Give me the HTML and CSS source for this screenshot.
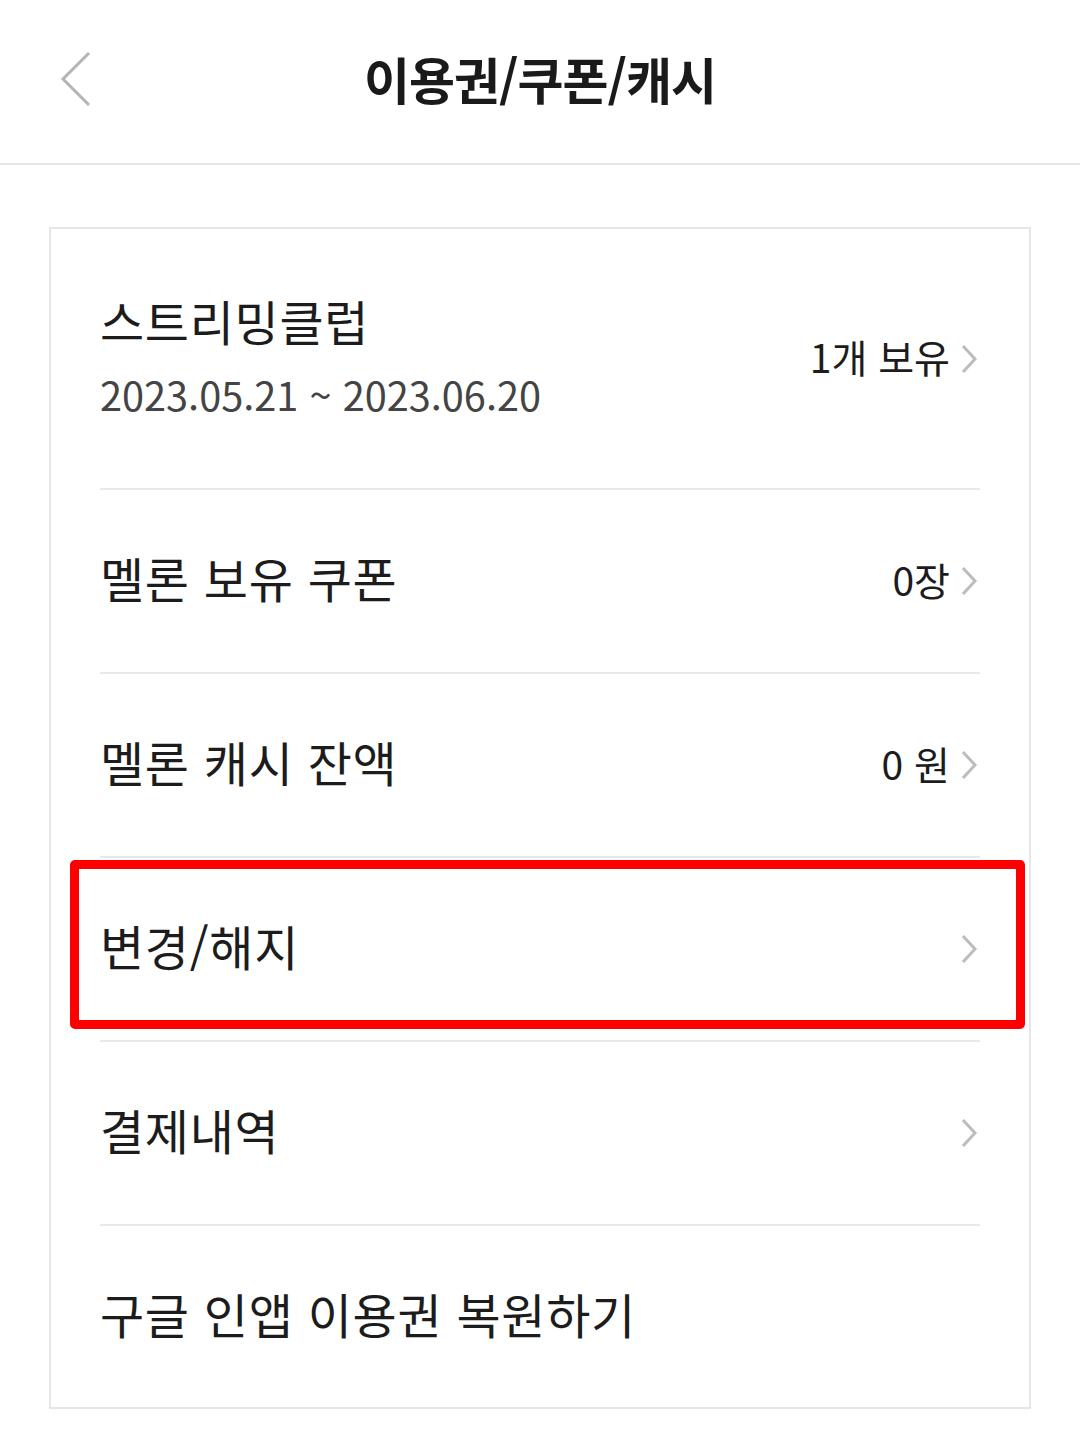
FILE: index.html
```html
<!DOCTYPE html>
<html lang="ko">
<head>
<meta charset="utf-8">
<link rel="stylesheet" href="styles.css">
</head>
<body>
<header class="topbar">
  <svg class="back" width="32" height="56" viewBox="0 0 32 56"><polyline points="29,2 3,28 29,54" fill="none" stroke="#b4b4b4" stroke-width="3"/></svg>
  <h1 class="title">이용권/쿠폰/캐시</h1>
</header>
<main class="card">
  <div class="row row-first">
    <div class="left">
      <div class="label">스트리밍클럽</div>
      <div class="date">2023.05.21 ~ 2023.06.20</div>
    </div>
    <div class="right"><span class="value">1개 보유</span><svg class="chev" width="18" height="30" viewBox="0 0 18 30"><polyline points="3,2 15,15 3,28" fill="none" stroke="#bcbcbc" stroke-width="3"/></svg></div>
  </div>
  <div class="row">
    <div class="label">멜론 보유 쿠폰</div>
    <div class="right"><span class="value">0장</span><svg class="chev" width="18" height="30" viewBox="0 0 18 30"><polyline points="3,2 15,15 3,28" fill="none" stroke="#bcbcbc" stroke-width="3"/></svg></div>
  </div>
  <div class="row">
    <div class="label">멜론 캐시 잔액</div>
    <div class="right"><span class="value">0 원</span><svg class="chev" width="18" height="30" viewBox="0 0 18 30"><polyline points="3,2 15,15 3,28" fill="none" stroke="#bcbcbc" stroke-width="3"/></svg></div>
  </div>
  <div class="row row-hl">
    <div class="label">변경/해지</div>
    <div class="right"><svg class="chev" width="18" height="30" viewBox="0 0 18 30"><polyline points="3,2 15,15 3,28" fill="none" stroke="#bcbcbc" stroke-width="3"/></svg></div>
    <div class="highlight"></div>
  </div>
  <div class="row">
    <div class="label">결제내역</div>
    <div class="right"><svg class="chev" width="18" height="30" viewBox="0 0 18 30"><polyline points="3,2 15,15 3,28" fill="none" stroke="#bcbcbc" stroke-width="3"/></svg></div>
  </div>
  <div class="row row-last">
    <div class="label">구글 인앱 이용권 복원하기</div>
  </div>
</main>
</body>
</html>
```
FILE: styles.css
```css
html, body {
  margin: 0;
  padding: 0;
  background: #ffffff;
}
body {
  width: 1080px;
  height: 1455px;
  font-family: "Noto Sans CJK KR", "Noto Sans", sans-serif;
  color: #1c1c1c;
  overflow: hidden;
}
.topbar {
  position: relative;
  height: 163px;
  border-bottom: 2px solid #e6e6e6;
  display: flex;
  align-items: center;
  justify-content: center;
  box-sizing: content-box;
}
.back {
  position: absolute;
  left: 60px;
  top: 51px;
}
.title {
  margin: 0;
  font-size: 50px;
  font-weight: 700;
  letter-spacing: -1px;
  color: #1a1a1a;
  transform: translateY(-4px);
}
.card {
  position: relative;
  margin: 62px 0 0 49px;
  width: 982px;
  box-sizing: border-box;
  border: 2px solid #e6e6e6;
  padding: 0 49px;
}
.row {
  position: relative;
  height: 182px;
  display: flex;
  align-items: center;
  justify-content: space-between;
  border-bottom: 2px solid #e8e8e8;
}
.row-first {
  height: 259px;
}
.row-last {
  height: 181px;
  border-bottom: none;
}
.left {
  display: flex;
  flex-direction: column;
}
.label {
  font-size: 48px;
  line-height: 1;
  color: #1c1c1c;
  letter-spacing: 0.7px;
  transform: translateY(-4px);
}
.row-first .label {
  transform: none;
  margin-top: -8px;
}
.date {
  margin-top: 30px;
  font-size: 39.7px;
  line-height: 1;
  color: #444444;
}
.right {
  display: flex;
  align-items: center;
  gap: 10px;
  margin-right: 2px;
}
.value {
  font-size: 39px;
  line-height: 1;
  color: #1c1c1c;
  transform: translateY(-2px);
}
.chev {
  display: block;
}
.highlight {
  position: absolute;
  left: -30px;
  right: -45px;
  top: 2px;
  bottom: 11px;
  border: 9px solid #ff0000;
  border-radius: 5px;
  pointer-events: none;
}
```
